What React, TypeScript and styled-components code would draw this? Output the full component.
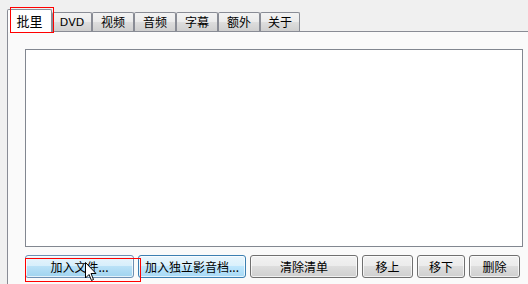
import React, { FC } from 'react';
import styled, { createGlobalStyle, css } from 'styled-components';

const GlobalStyle = createGlobalStyle`
    html, body {
        margin: 0;
        padding: 0;
        background: #f0f0f0;
    }
    body {
        font-family: 'Noto Sans CJK SC', 'DejaVu Sans', sans-serif;
        font-size: 12px;
        color: #000;
    }
`;

const Window = styled.div`
    position: relative;
    width: 528px;
    height: 284px;
    padding: 9px 0 0 7px;
    box-sizing: border-box;
    overflow: hidden;
    background: #f0f0f0;
`;

const TabStrip = styled.div`
    display: flex;
    align-items: flex-end;
    height: 22px;
`;

const Tab = styled.div<{ $active?: boolean; $width: number; $latin?: boolean }>`
    position: relative;
    box-sizing: border-box;
    width: ${(p) => p.$width}px;
    height: 19px;
    border: 1px solid #898c95;
    border-bottom: none;
    border-radius: 2px 2px 0 0;
    background: linear-gradient(#f3f3f3, #ebebeb 50%, #dedede 50%, #cfcfcf);
    display: flex;
    align-items: center;
    justify-content: center;
    font-size: 12px;
    line-height: 1;
    ${(p) => p.$latin && css`font-family: 'DejaVu Sans', sans-serif; font-size: 11px;`}
    ${(p) =>
        p.$active &&
        css`
            height: 23px;
            margin-bottom: -1px;
            z-index: 1;
            background: #fff;
            font-size: 13px;
            padding-bottom: 2px;
        `}
`;

const Panel = styled.div`
    height: 260px;
    border-top: 1px solid #898c95;
    border-left: 1px solid #898c95;
    background: #fafafa;
    padding: 17px 0 0 17px;
    box-sizing: border-box;
`;

const ListBox = styled.div`
    box-sizing: border-box;
    width: 498px;
    height: 198px;
    border: 1px solid #828790;
    background: #fff;
`;

const ButtonRow = styled.div`
    display: flex;
    gap: 4px;
    margin-top: 8px;
`;

type Look = 'normal' | 'focus' | 'hover';

const looks: Record<Look, ReturnType<typeof css>> = {
    normal: css`
        border-color: #707070;
        background: linear-gradient(#f2f2f2, #ebebeb 50%, #dddddd 50%, #cfcfcf);
    `,
    focus: css`
        border-color: #6d8fb3;
        background: linear-gradient(#e8f5fc, #d6eefb 50%, #b9e1f7 50%, #a0d3ef);
    `,
    hover: css`
        border-color: #3c7fb1;
        background: linear-gradient(#eaf6fd, #d9f0fc 50%, #bee6fd 50%, #a7d9f5);
    `,
};

const Button = styled.div<{ $width: number; $look: Look }>`
    box-sizing: border-box;
    width: ${(p) => p.$width}px;
    height: 23px;
    border: 1px solid;
    border-radius: 3px;
    box-shadow: inset 0 0 0 1px rgba(255, 255, 255, 0.7);
    display: flex;
    align-items: center;
    justify-content: center;
    font-size: 12px;
    line-height: 1;
    white-space: nowrap;
    ${(p) => looks[p.$look]}
`;

const Mark = styled.div<{ $x: number; $y: number; $w: number; $h: number }>`
    position: absolute;
    left: ${(p) => p.$x}px;
    top: ${(p) => p.$y}px;
    width: ${(p) => p.$w}px;
    height: ${(p) => p.$h}px;
    border: 1px solid #f00;
    box-sizing: border-box;
    z-index: 5;
    pointer-events: none;
`;

const Cursor = styled.svg`
    position: absolute;
    left: 85px;
    top: 262px;
    z-index: 6;
`;

const tabs = [
    { label: '批里', width: 45, active: true },
    { label: 'DVD', width: 40, latin: true },
    { label: '视频', width: 42 },
    { label: '音频', width: 42 },
    { label: '字幕', width: 42 },
    { label: '额外', width: 42 },
    { label: '关于', width: 40 },
];

const buttons: { label: string; width: number; look: Look }[] = [
    { label: '加入文件...', width: 109, look: 'focus' },
    { label: '加入独立影音档...', width: 108, look: 'hover' },
    { label: '清除清单', width: 108, look: 'normal' },
    { label: '移上', width: 51, look: 'normal' },
    { label: '移下', width: 48, look: 'normal' },
    { label: '删除', width: 51, look: 'normal' },
];

const App: FC = () => {
    return (
        <Window>
            <GlobalStyle />
            <TabStrip>
                {tabs.map((t) => (
                    <Tab key={t.label} $width={t.width} $active={t.active} $latin={t.latin}>
                        {t.label}
                    </Tab>
                ))}
            </TabStrip>
            <Panel>
                <ListBox />
                <ButtonRow>
                    {buttons.map((b) => (
                        <Button key={b.label} $width={b.width} $look={b.look}>
                            {b.label}
                        </Button>
                    ))}
                </ButtonRow>
            </Panel>
            <Mark $x={10} $y={7} $w={44} $h={26} />
            <Mark $x={25} $y={258} $w={116} $h={24} />
            <Cursor width="12" height="20" viewBox="0 0 12 20">
                <path d="M0.5 0.5 L0.5 16 L4 12.5 L6.5 18.5 L8.5 17.5 L6 11.5 L11 11.5 Z" fill="#fff" stroke="#000" strokeWidth="1" />
            </Cursor>
        </Window>
    );
};

export default App;
